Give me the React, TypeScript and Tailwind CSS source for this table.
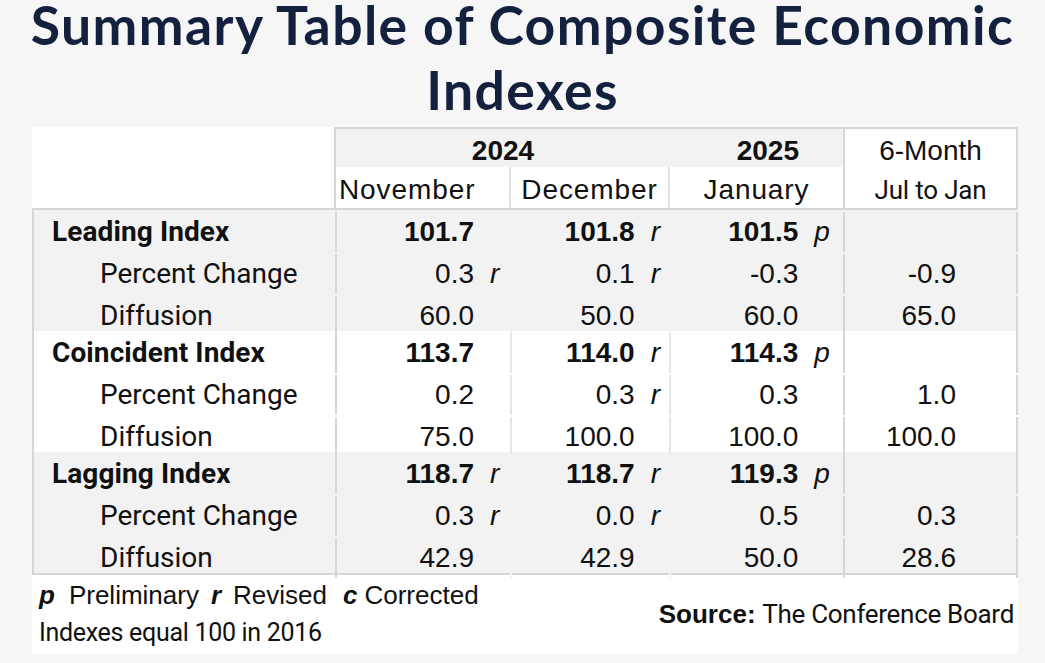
import React from "react";

type Cell = { v: string; f?: string };
type Row = { label: string; main?: boolean; cells: Cell[]; six: string };
type Group = { bg: string; sep: string; rows: Row[] };

const groups: Group[] = [
  {
    bg: "bg-[#f2f2f2]",
    sep: "border-[#f2f2f2]",
    rows: [
      { label: "Leading Index", main: true, cells: [{ v: "101.7" }, { v: "101.8", f: "r" }, { v: "101.5", f: "p" }], six: "" },
      { label: "Percent Change", cells: [{ v: "0.3", f: "r" }, { v: "0.1", f: "r" }, { v: "-0.3" }], six: "-0.9" },
      { label: "Diffusion", cells: [{ v: "60.0" }, { v: "50.0" }, { v: "60.0" }], six: "65.0" },
    ],
  },
  {
    bg: "bg-white",
    sep: "border-[#e6e6e6]",
    rows: [
      { label: "Coincident Index", main: true, cells: [{ v: "113.7" }, { v: "114.0", f: "r" }, { v: "114.3", f: "p" }], six: "" },
      { label: "Percent Change", cells: [{ v: "0.2" }, { v: "0.3", f: "r" }, { v: "0.3" }], six: "1.0" },
      { label: "Diffusion", cells: [{ v: "75.0" }, { v: "100.0" }, { v: "100.0" }], six: "100.0" },
    ],
  },
  {
    bg: "bg-[#f2f2f2]",
    sep: "border-[#f2f2f2]",
    rows: [
      { label: "Lagging Index", main: true, cells: [{ v: "118.7", f: "r" }, { v: "118.7", f: "r" }, { v: "119.3", f: "p" }], six: "" },
      { label: "Percent Change", cells: [{ v: "0.3", f: "r" }, { v: "0.0", f: "r" }, { v: "0.5" }], six: "0.3" },
      { label: "Diffusion", cells: [{ v: "42.9" }, { v: "42.9" }, { v: "50.0" }], six: "28.6" },
    ],
  },
];

// flag slot width per month column
const slots = ["w-[36px]", "w-[34px]", "w-[45px]"];
const widths = ["w-[175px]", "w-[159px]", "w-[175px]"];

const arial = "font-['Liberation_Sans',Arial,sans-serif]";
const aptos = "font-['Roboto',sans-serif]";

function DataRow({ row, sep }: { row: Row; sep: string }) {
  return (
    <div className="flex flex-1 text-[28px] leading-[40px] text-[#111] pt-[2px]">
      <div
        className={`w-[304px] border-r-2 border-[#d6d6d6] ${aptos} ${
          row.main ? "pl-[18px] font-bold tracking-[0.1px]" : "pl-[66px] tracking-[0px]"
        }`}
      >
        {row.label}
      </div>
      {row.cells.map((c, i) => (
        <div
          key={i}
          className={`${widths[i]} flex justify-end border-r-2 ${i === 2 ? "border-[#d6d6d6]" : sep} ${arial} ${
            row.main ? "font-bold" : ""
          }`}
        >
          <span>{c.v}</span>
          <span className={`${slots[i]} pl-[16px] italic font-normal`}>{c.f}</span>
        </div>
      ))}
      <div className={`w-[173px] border-r-2 border-[#d6d6d6] text-right pr-[60px] ${arial}`}>{row.six}</div>
    </div>
  );
}

export default function App() {
  return (
    <div className="w-[1045px] h-[663px] bg-[#f6f6f6] overflow-hidden">
      <h1 className="text-center font-['Lato',sans-serif] font-bold text-[53.5px] tracking-[1.4px] text-[#13213e] h-[127px]">
        <div className="leading-[49px]">Summary Table of Composite Economic</div>
        <div className="leading-[75px] pt-[3px]">Indexes</div>
      </h1>

      <div className="ml-[32px] w-[986px] bg-white">
        {/* header */}
        <div className="flex">
          <div className="w-[304px] border-r-2 border-[#d6d6d6] bg-white" />
          <div className="flex flex-col">
            <div className={`flex h-[40px] bg-[#f2f2f2] border-t-2 border-[#d6d6d6] text-[28px] font-bold text-[#111] ${arial}`}>
              <div className="w-[334px] text-center leading-[44px]">2024</div>
              <div className="w-[175px] border-r-2 border-[#d6d6d6] text-right pr-[44px] leading-[44px]">2025</div>
            </div>
            <div className={`flex h-[41px] text-[28px] tracking-[0.9px] text-[#111] ${arial}`}>
              <div className="w-[175px] border-r-2 border-[#e3e3e3] pl-[3px] leading-[46px]">November</div>
              <div className="w-[159px] border-r-2 border-[#e3e3e3] text-center leading-[46px]">December</div>
              <div className="w-[175px] border-r-2 border-[#d6d6d6] text-center leading-[46px]">January</div>
            </div>
          </div>
          <div className="w-[173px] border-t-2 border-r-2 border-[#d6d6d6] text-center text-[#111]">
            <div className={`${arial} text-[28px] leading-[44px]`}>6-Month</div>
            <div className={`${aptos} text-[26px] leading-[34px] tracking-[-0.2px]`}>Jul to Jan</div>
          </div>
        </div>

        {/* data */}
        <div className="border-t-2 border-b-2 border-l-2 border-[#d6d6d6]">
          {groups.map((g, gi) => (
            <div key={gi} className={`${g.bg} h-[121px] flex flex-col`}>
              {g.rows.map((r, ri) => (
                <DataRow key={ri} row={r} sep={g.sep} />
              ))}
            </div>
          ))}
        </div>

        {/* footer */}
        <div className="flex justify-between h-[79px] text-[#111]">
          <div className="pl-[7px] pt-[2px] leading-[37px]">
            <div className={`${arial} text-[26px] flex items-baseline`}>
              <span className="font-bold italic">p</span>
              <span className="ml-[14px]">Preliminary</span>
              <span className="font-bold italic ml-[12px]">r</span>
              <span className="ml-[12px]">Revised</span>
              <span className="font-bold italic ml-[16px]">c</span>
              <span className="ml-[7px]">Corrected</span>
            </div>
            <div className={`${aptos} text-[25px] tracking-[-0.3px]`}>Indexes equal 100 in 2016</div>
          </div>
          <div className="pr-[4px] pt-[20px] leading-[37px] text-[26px]">
            <span className={`${arial} font-bold`}>Source:</span>{" "}
            <span className={`${aptos} tracking-[-0.3px]`}>The Conference Board</span>
          </div>
        </div>
      </div>
    </div>
  );
}
